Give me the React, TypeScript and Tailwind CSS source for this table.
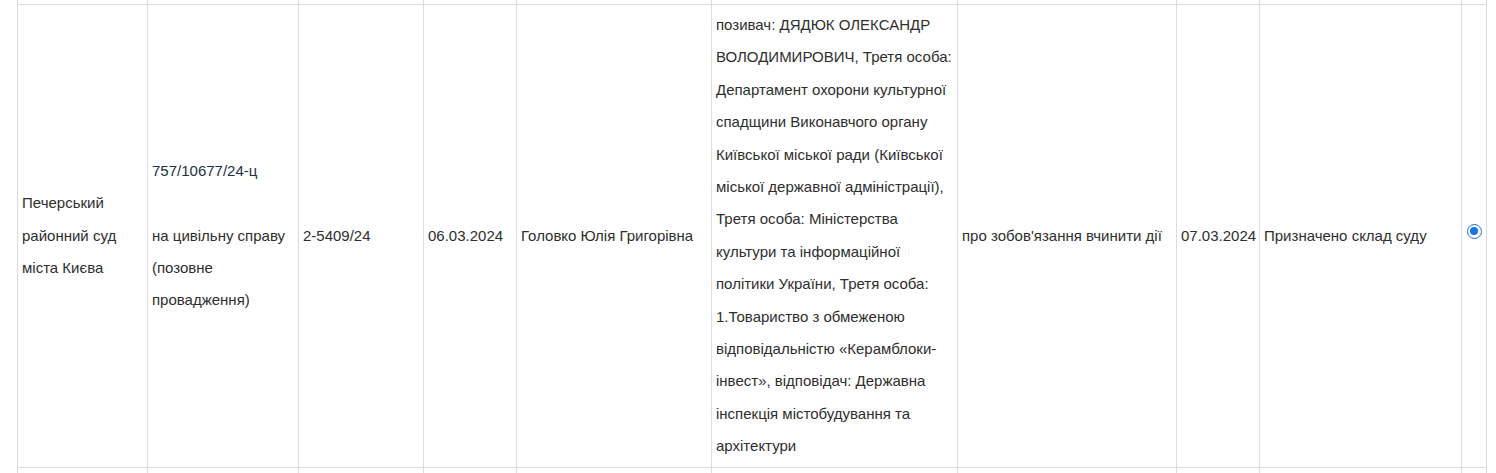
const cell = 'border border-[#dddddd] px-[4px] py-[4px] align-middle text-left font-normal'

const widths = [130, 151, 125, 93, 195, 246, 219, 83, 202, 25]

export default function App() {
  return (
    <div className="h-[473px] w-[1496px] overflow-hidden bg-white">
      <table
        className="-mt-[40px] ml-[17px] table-fixed border-collapse text-[15px] leading-[32.4px] text-[#2e2e2e]"
        style={{ fontFamily: '"Liberation Sans", Arial, sans-serif', width: 1470 }}
      >
        <colgroup>
          {widths.map((w, i) => (
            <col key={i} style={{ width: w }} />
          ))}
        </colgroup>
        <tbody>
          {/* previous row, only its bottom edge shows */}
          <tr className="h-[44px]">
            {widths.map((_, i) => (
              <td key={i} className={cell} />
            ))}
          </tr>
          <tr>
            <td className={cell}>Печерський районний суд міста Києва</td>
            <td className={cell}>
              <a href="#" className="text-[#1c3146] no-underline">
                757/10677/24-ц
              </a>
              <br />
              <br />
              на цивільну справу (позовне провадження)
            </td>
            <td className={cell}>2-5409/24</td>
            <td className={cell}>06.03.2024</td>
            <td className={cell}>Головко Юлія Григорівна</td>
            <td className={cell}>
              позивач: ДЯДЮК ОЛЕКСАНДР ВОЛОДИМИРОВИЧ, Третя особа: Департамент охорони культурної
              спадщини Виконавчого органу Київської міської ради (Київської міської державної
              адміністрації), Третя особа: Міністерства культури та інформаційної політики України,
              Третя особа: 1.Товариство з обмеженою відповідальністю «Керамблоки-інвест», відповідач:
              Державна інспекція містобудування та архітектури
            </td>
            <td className={cell}>про зобов'язання вчинити дії</td>
            <td className={cell}>07.03.2024</td>
            <td className={cell}>Призначено склад суду</td>
            <td className={`${cell} px-0`}>
              {/* checked radio */}
              <span className="mx-auto -mt-[9px] flex h-[15px] w-[15px] items-center justify-center rounded-full border-[1.5px] border-[#1a73e8] bg-white">
                <span className="h-[8px] w-[8px] rounded-full bg-[#1a73e8]" />
              </span>
            </td>
          </tr>
          <tr className="h-[40px]">
            {widths.map((_, i) => (
              <td key={i} className={cell} />
            ))}
          </tr>
        </tbody>
      </table>
    </div>
  )
}
